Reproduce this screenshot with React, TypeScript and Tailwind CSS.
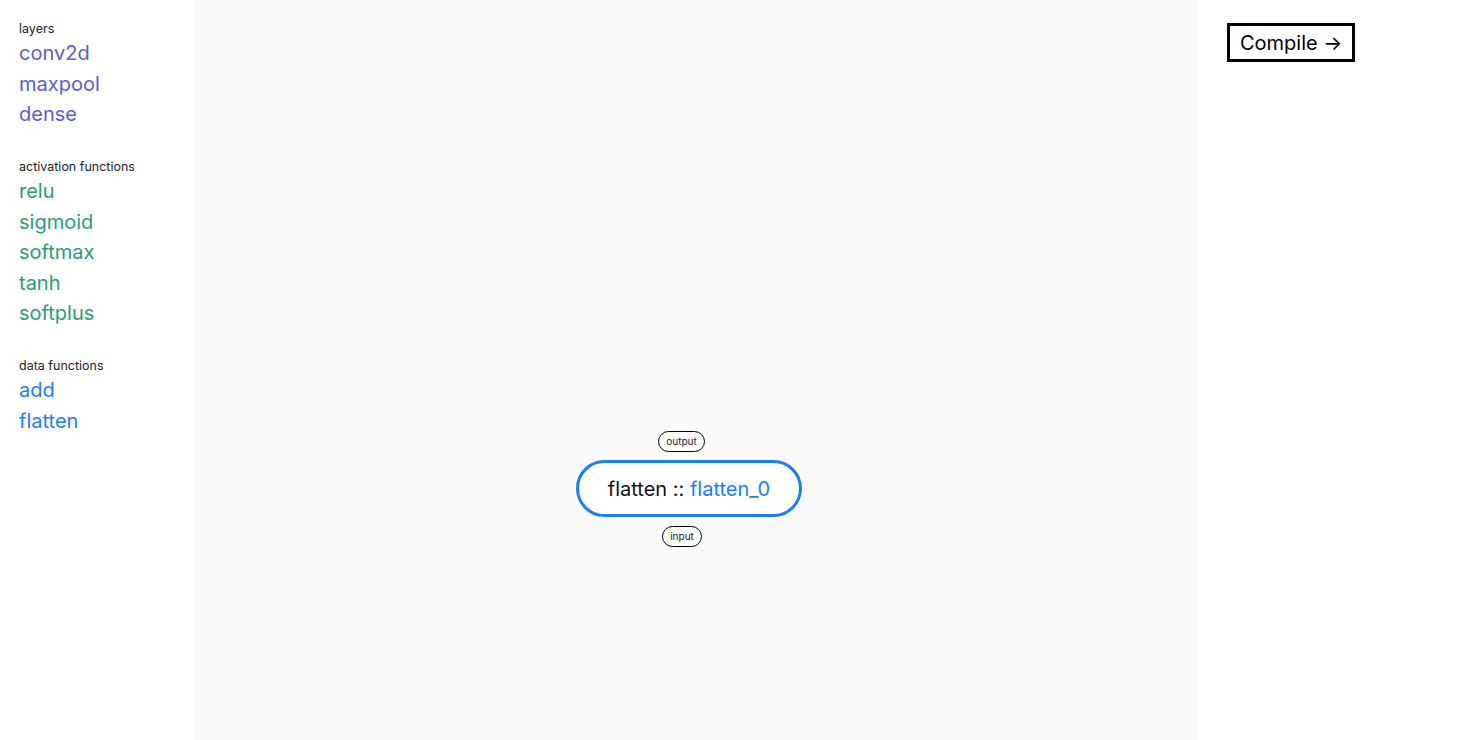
import React from 'react';

interface Section {
  title: string;
  color: string;
  items: string[];
}

const sections: Section[] = [
  { title: 'layers', color: 'text-[#5b5bdc]', items: ['conv2d', 'maxpool', 'dense'] },
  { title: 'activation functions', color: 'text-[#2a9c7c]', items: ['relu', 'sigmoid', 'softmax', 'tanh', 'softplus'] },
  { title: 'data functions', color: 'text-[#1a80f2]', items: ['add', 'flatten'] },
];

const Port: React.FC<{ label: string; className: string }> = ({ label, className }) => (
  <div
    className={`absolute h-[21px] flex items-center justify-center rounded-full border border-black bg-white text-[10px] text-[#222] ${className}`}
  >
    {label}
  </div>
);

export default function App() {
  return (
    <div className="flex h-[740px] w-full bg-white font-['Inter','Noto_Sans',sans-serif] overflow-hidden">
      <aside className="w-[194px] shrink-0 pl-[19px] pt-[20px] flex flex-col gap-[28.5px]">
        {sections.map(sec => (
          <div key={sec.title} className="flex flex-col">
            <span className="text-[12.5px] leading-[18px] text-[#222]">{sec.title}</span>
            {sec.items.map(item => (
              <span key={item} className={`text-[20px] leading-[30.5px] cursor-pointer ${sec.color}`}>
                {item}
              </span>
            ))}
          </div>
        ))}
      </aside>

      <main className="relative w-[1003px] shrink-0 bg-[#fafafa]">
        <Port label="output" className="left-[464px] top-[431px] w-[47px]" />
        <div className="absolute left-[382px] top-[460px] w-[226px] h-[57px] rounded-full border-[3px] border-[#1a80f2] bg-white flex items-center justify-center text-[20px] text-[#111]">
          <span>
            flatten :: <span className="text-[#1a80f2]">flatten_0</span>
          </span>
        </div>
        <Port label="input" className="left-[468px] top-[526px] w-[40px]" />
      </main>

      <section className="flex-1 pl-[30px] pt-[23px]">
        <button className="h-[39px] px-[10px] border-[3px] border-black bg-white text-[20px] text-black flex items-center">
          Compile →
        </button>
      </section>
    </div>
  );
}
